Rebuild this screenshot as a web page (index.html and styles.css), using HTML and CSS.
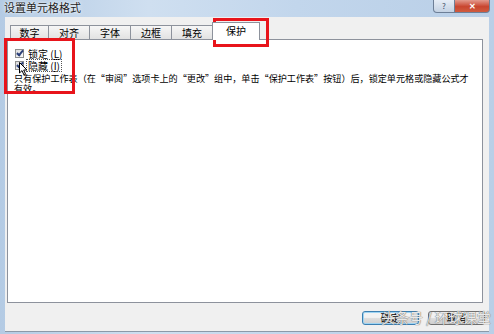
FILE: index.html
```html
<!DOCTYPE html>
<html lang="zh-CN">
<head>
  <meta charset="UTF-8">
  <title>设置单元格格式</title>
  <link rel="stylesheet" href="styles.css">
</head>
<body>
  <div class="window">
    <div class="titlebar">
      <span class="title">设置单元格格式</span>
      <div class="caption-btns">
        <span class="cap-help">?</span>
        <span class="cap-close">✕</span>
      </div>
    </div>
    <div class="client">
      <div class="tabs">
        <span class="tab">数字</span>
        <span class="tab">对齐</span>
        <span class="tab">字体</span>
        <span class="tab">边框</span>
        <span class="tab">填充</span>
        <span class="tab active">保护</span>
      </div>
      <div class="panel">
        <label class="check-row">
          <span class="box checked"></span>
          <span class="check-label">锁定 (<u>L</u>)</span>
        </label>
        <label class="check-row">
          <span class="box checked"></span>
          <span class="check-label focus">隐藏 (<u>I</u>)</span>
        </label>
        <p class="desc">只有保护工作表(在“审阅”选项卡上的“更改”组中，单击“保护工作表”按钮)后，锁定单元格或隐藏公式才有效。</p>
      </div>
      <div class="footer">
        <button class="btn default">确定</button>
        <button class="btn">取消</button>
      </div>
    </div>

    <!-- 标注框 -->
    <div class="mark mark-tab"></div>
    <div class="mark mark-checks"></div>
    <svg class="cursor" width="9" height="14" viewBox="0 0 9 14">
      <path d="M0.5 0.5 L0.5 11 L3 8.6 L5 13 L6.6 12.3 L4.7 8 L8 8 Z" fill="#fff" stroke="#000" stroke-width="1"/>
    </svg>
    <div class="watermark">头条号 / 环球课堂</div>
  </div>
</body>
</html>
```

FILE: styles.css
```css
body {
  margin: 0;
  font-family: "Noto Sans CJK SC", "Liberation Sans", sans-serif;
  color: #000;
}
.window {
  position: relative;
  width: 494px;
  height: 334px;
  background: linear-gradient(90deg, #b4cbe4 0%, #cfdff0 30%, #c2d6ec 60%, #b9cfe7 100%);
  display: flex;
  flex-direction: column;
  overflow: hidden;
}
.titlebar {
  height: 17px;
  display: flex;
  justify-content: space-between;
  align-items: flex-start;
  padding-left: 4px;
}
.title {
  font-size: 11px;
  line-height: 15px;
  color: #1e1e1e;
  text-shadow: 0 0 4px #eef4fb, 0 0 2px #fff;
}
.caption-btns {
  display: flex;
  margin-right: 4px;
}
.caption-btns span {
  height: 12px;
  font-size: 8px;
  line-height: 12px;
  text-align: center;
  border: 1px solid #6d7f97;
  border-top: none;
}
.cap-help {
  width: 20px;
  color: #3c4c66;
  background: linear-gradient(#e6edf6, #c4d2e3);
  border-radius: 0 0 0 4px;
}
.cap-close {
  width: 34px;
  color: #fff;
  font-weight: bold;
  background: linear-gradient(#e39a8e, #c9452f 55%, #d05c40);
  border-left: none !important;
  border-radius: 0 0 4px 0;
}
.client {
  flex: 1;
  margin: 0 5px 2px 5px;
  background: #f0f0f0;
  padding: 8px 0 0 2px;
  display: flex;
  flex-direction: column;
  border-bottom: 1px solid #8c99a8;
}
.tabs {
  display: flex;
  align-items: flex-end;
  padding-left: 3px;
  height: 14px;
}
.tab {
  width: 41px;
  height: 14px;
  box-sizing: border-box;
  border: 1px solid #8d929c;
  border-bottom: none;
  border-left: none;
  background: linear-gradient(#f6f6f6, #e2e2e2);
  font-size: 10px;
  line-height: 13px;
  text-align: center;
}
.tab:first-child {
  border-left: 1px solid #8d929c;
  width: 39px;
}
.tab.active {
  width: 48px;
  height: 18px;
  margin-bottom: -1px;
  margin-left: -1px;
  border-left: 1px solid #8d929c;
  background: #fff;
  line-height: 15px;
  position: relative;
  z-index: 1;
}
.panel {
  width: 476px;
  height: 264px;
  box-sizing: border-box;
  background: #fff;
  border: 1px solid #8d929c;
  padding: 7px 6px 0 7px;
}
.check-row {
  display: flex;
  align-items: center;
  gap: 3px;
  height: 12px;
  font-size: 10px;
  line-height: 11px;
}
.box {
  width: 9px;
  height: 9px;
  box-sizing: border-box;
  border: 1px solid #8e8f8f;
  background: linear-gradient(135deg, #dcdcdc, #fbfbfb);
  position: relative;
}
.box.checked::after {
  content: "";
  position: absolute;
  left: 2px;
  top: -1px;
  width: 2px;
  height: 5px;
  border: solid #2b3f78;
  border-width: 0 2px 2px 0;
  transform: rotate(40deg);
}
.check-label {
  padding: 0 1px;
}
.check-label.focus {
  outline: 1px dotted #555;
  outline-offset: 0;
}
.desc {
  margin: 2px 0 0 -1px;
  font-size: 9.1px;
  line-height: 10px;
  width: 462px;
  font-feature-settings: "fwid";
}
.footer {
  display: flex;
  justify-content: flex-end;
  gap: 9px;
  padding: 8px 4px 0 0;
}
.btn {
  width: 57px;
  height: 14px;
  padding: 0;
  font-family: inherit;
  font-size: 10px;
  line-height: 12px;
  border: 1px solid #707070;
  border-radius: 3px;
  background: linear-gradient(#f2f2f2 45%, #dcdcdc 55%, #cfcfcf);
  color: #000;
}
.btn.default {
  border-color: #3c7fb1;
  box-shadow: inset 0 0 0 1px #9ed4f3;
}
.mark {
  position: absolute;
  border: 3px solid #e8141b;
  box-sizing: border-box;
}
.mark-tab {
  left: 213px;
  top: 18px;
  width: 56px;
  height: 29px;
}
.mark-checks {
  left: 4px;
  top: 38px;
  width: 71px;
  height: 56px;
}
.cursor {
  position: absolute;
  left: 19px;
  top: 62px;
}
.watermark {
  position: absolute;
  left: 381px;
  top: 309px;
  font-size: 14px;
  line-height: 17px;
  color: rgba(255, 255, 255, 0.85);
  text-shadow: 0 0 1px #6d6d6d, 0 0 1px #6d6d6d;
}
```
